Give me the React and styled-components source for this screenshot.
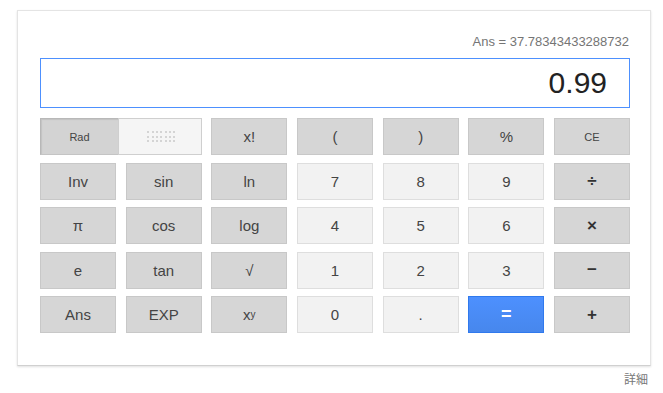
import React from "react";
import styled, { createGlobalStyle, css } from "styled-components";

const Global = createGlobalStyle`
  html, body { margin: 0; padding: 0; background: #fff; }
  body { font-family: Arial, "Liberation Sans", sans-serif; }
`;

const Page = styled.div`
  padding: 10px 12px 0 17px;
  width: 634px;
`;

const Card = styled.div`
  box-sizing: border-box;
  width: 634px;
  border: 1px solid #e4e4e4;
  border-bottom-color: #d0d0d0;
  box-shadow: 0 1px 2px rgba(0, 0, 0, 0.12);
  padding: 22px 20px 32px 22px;
  background: #fff;
`;

const AnsLine = styled.div`
  text-align: right;
  font-size: 13px;
  color: #757575;
  height: 17px;
  line-height: 17px;
  padding-right: 1px;
  margin-bottom: 8px;
`;

const Display = styled.div`
  box-sizing: border-box;
  height: 50px;
  border: 1px solid #4d90fe;
  display: flex;
  align-items: center;
  justify-content: flex-end;
  padding: 0 22px 0 10px;
  font-size: 30px;
  color: #222;
  margin-bottom: 10px;
`;

const Grid = styled.div`
  display: grid;
  grid-template-columns: repeat(7, 1fr);
  grid-auto-rows: 37px;
  column-gap: 9.67px;
  row-gap: 7.5px;
`;

const variants = {
  op: css`
    background: #d6d6d6;
    border: 1px solid #c8c8c8;
    color: #444;
  `,
  num: css`
    background: #f2f2f2;
    border: 1px solid #dedede;
    color: #444;
  `,
  eq: css`
    background: linear-gradient(#4d90fe, #4787ed);
    border: 1px solid #3079ed;
    color: #fff;
    font-weight: bold;
    font-size: 18px;
  `,
};

const Key = styled.div`
  box-sizing: border-box;
  display: flex;
  align-items: center;
  justify-content: center;
  font-size: ${(p) => (p.$small ? "11px" : "15px")};
  ${(p) => variants[p.$kind || "op"]};
  ${(p) => p.$strong && css`font-weight: bold; color: #333; font-size: 17px;`}
`;

const Toggle = styled.div`
  grid-column: span 2;
  display: flex;
`;

const RadPart = styled.div`
  box-sizing: border-box;
  width: 79px;
  display: flex;
  align-items: center;
  justify-content: center;
  font-size: 11px;
  color: #444;
  background: #d3d3d3;
  border: 1px solid #c4c4c4;
  border-left-color: #b8b8b8;
  border-top-color: #b8b8b8;
  box-shadow: inset 1px 1px 1px rgba(0, 0, 0, 0.08);
`;

const DegPart = styled.div`
  box-sizing: border-box;
  flex: 1;
  margin-left: -1px;
  display: flex;
  align-items: center;
  justify-content: center;
  background: #f5f5f5;
  border: 1px solid #cfcfcf;
`;

const Dots = styled.div`
  display: grid;
  grid-template-columns: repeat(7, 2px);
  grid-auto-rows: 2px;
  column-gap: 2.3px;
  row-gap: 2.3px;
  margin-left: 3px;
  & > span {
    background: #d4d4d4;
  }
`;

const Sup = styled.sup`
  font-size: 10px;
  vertical-align: 6px;
  line-height: 0;
`;

const Footer = styled.div`
  width: 634px;
  text-align: right;
  font-size: 12px;
  color: #777;
  margin-top: 4px;
  padding-right: 3px;
  box-sizing: border-box;
  font-family: Arial, "Liberation Sans", "Noto Sans CJK JP", sans-serif;
`;

const rows = [
  [
    { t: "x!" },
    { t: "(" },
    { t: ")" },
    { t: "%" },
    { t: "CE", small: true },
  ],
  [
    { t: "Inv" }, { t: "sin" }, { t: "ln" },
    { t: "7", k: "num" }, { t: "8", k: "num" }, { t: "9", k: "num" },
    { t: "÷", strong: true },
  ],
  [
    { t: "π" }, { t: "cos" }, { t: "log" },
    { t: "4", k: "num" }, { t: "5", k: "num" }, { t: "6", k: "num" },
    { t: "×", strong: true },
  ],
  [
    { t: "e" }, { t: "tan" }, { t: "√" },
    { t: "1", k: "num" }, { t: "2", k: "num" }, { t: "3", k: "num" },
    { t: "−", strong: true },
  ],
  [
    { t: "Ans" }, { t: "EXP" }, { t: "xy", sup: true },
    { t: "0", k: "num" }, { t: ".", k: "num" }, { t: "=", k: "eq" },
    { t: "+", strong: true },
  ],
];

export default function App() {
  return (
    <>
      <Global />
      <Page>
        <Card>
          <AnsLine>Ans = 37.78343433288732</AnsLine>
          <Display>0.99</Display>
          <Grid>
            <Toggle>
              <RadPart>Rad</RadPart>
              <DegPart>
                <Dots>
                  {Array.from({ length: 21 }).map((_, i) => (
                    <span key={i} />
                  ))}
                </Dots>
              </DegPart>
            </Toggle>
            {rows.flat().map((b, i) => (
              <Key key={i} $kind={b.k} $small={b.small} $strong={b.strong}>
                {b.sup ? (
                  <>
                    x<Sup>y</Sup>
                  </>
                ) : (
                  b.t
                )}
              </Key>
            ))}
          </Grid>
        </Card>
        <Footer>詳細</Footer>
      </Page>
    </>
  );
}
